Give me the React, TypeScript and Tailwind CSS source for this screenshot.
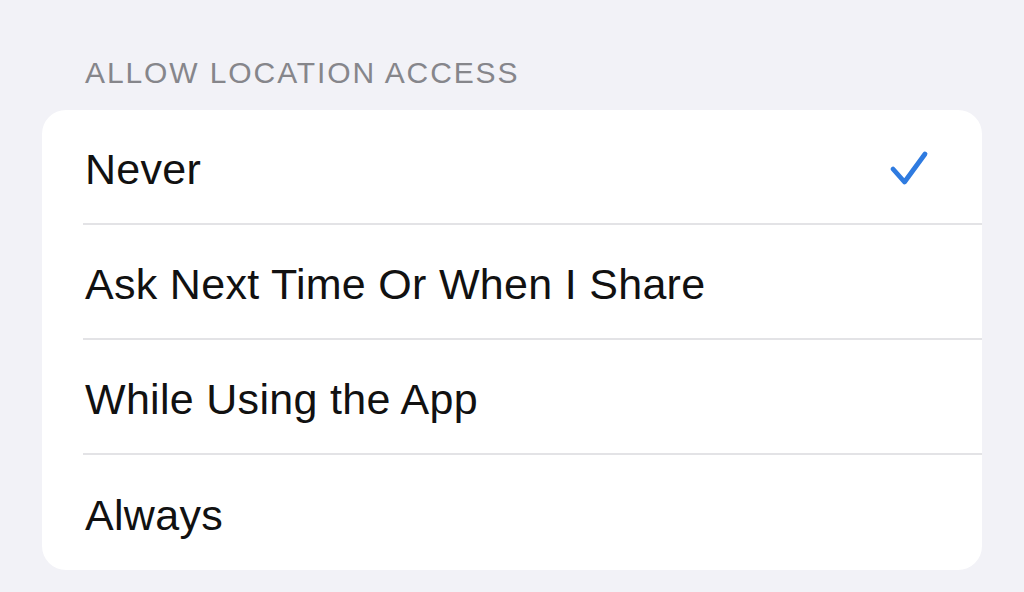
const options = ['Never', 'Ask Next Time Or When I Share', 'While Using the App', 'Always']

function Check() {
  return (
    <svg width="40" height="40" viewBox="0 0 40 40" fill="none" className="mt-[4px]">
      <path
        d="M4 20L15.5 33L36 5"
        stroke="#2f7be0"
        strokeWidth="4.8"
        strokeLinecap="round"
        strokeLinejoin="round"
      />
    </svg>
  )
}

export default function App() {
  const selected = 'Never'

  return (
    <div
      className="w-[1024px] h-[592px] overflow-hidden bg-[#f2f2f7] px-[42px]"
      style={{ fontFamily: '"Liberation Sans", Arial, sans-serif' }}
    >
      {/* Section header */}
      <div className="pt-[56px] pb-[20px] pl-[43px] text-[30px] leading-[34px] text-[#86868b] tracking-[1.9px]">
        ALLOW LOCATION ACCESS
      </div>

      {/* Options card */}
      <div className="bg-white rounded-[24px] overflow-hidden">
        {options.map((label, i) => (
          <div key={label} className="h-[115px] flex pl-[41px]">
            <div
              className={`flex-1 flex items-center justify-between pl-[2px] pr-[53px] ${
                i < options.length - 1 ? 'border-b-[2px] border-[#e3e3e6]' : ''
              }`}
            >
              <span className="text-[43px] leading-none text-[#111] tracking-[0.3px] pt-[6px]">
                {label}
              </span>
              {label === selected && <Check />}
            </div>
          </div>
        ))}
      </div>
    </div>
  )
}
